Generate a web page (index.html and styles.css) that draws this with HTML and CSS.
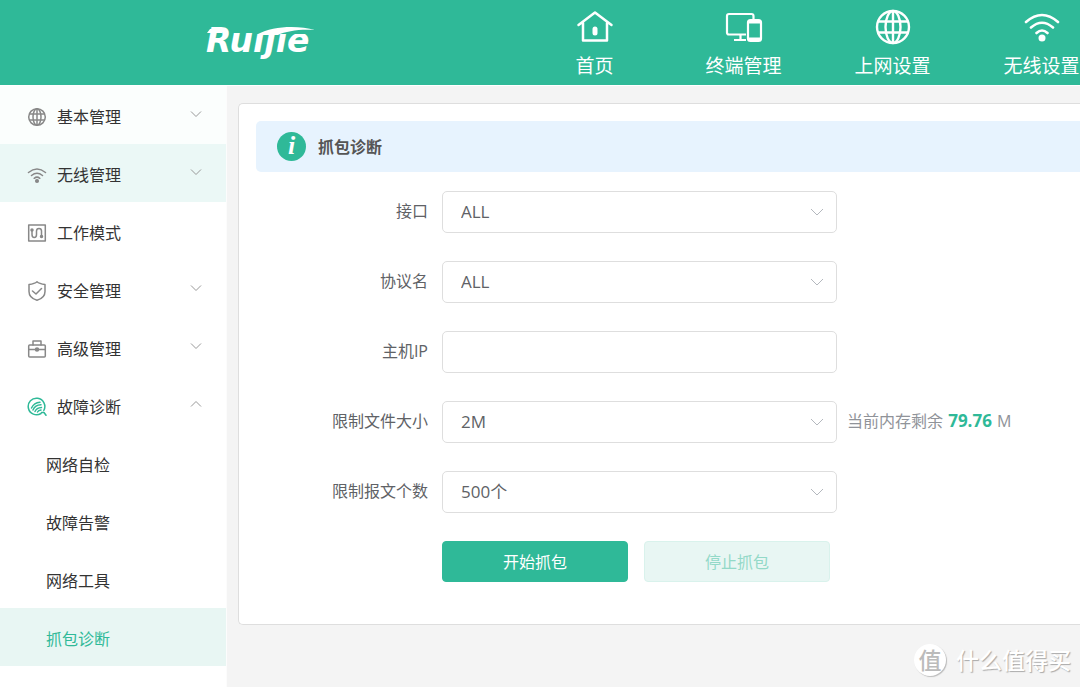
FILE: index.html
```
<!DOCTYPE html>
<html lang="zh-CN">
<head>
<meta charset="utf-8">
<title>抓包诊断</title>
<link rel="stylesheet" href="styles.css">
</head>
<body>
<header class="topbar">
  <a class="brand" href="#" aria-label="Ruijie">
    <svg class="brand-logo" width="124" height="46" viewBox="0 0 124 46">
      <text class="brand-text" x="6" y="32">Ruijie</text>
      <path class="brand-mask" d="M56 0H112V14H56Z"/>
      <path class="brand-shape" d="M10 9H22V13H7Z"/>
      <path class="brand-shape" d="M58 14C72 6 98 5 115 10C100 9 86 11 78 15H58Z"/>
    </svg>
  </a>
  <nav class="topnav">
    <a class="topnav-item" href="#">
      <svg width="38" height="38" viewBox="0 0 38 38" fill="none" stroke="#fff" stroke-width="2.5" stroke-linejoin="round" stroke-linecap="round"><path d="M2.5 17L19 4.500L35.500 17M7 15V32.500H31V15"/><path d="M19 21V25" stroke-width="5"/></svg>
      <span>首页</span>
    </a>
    <a class="topnav-item" href="#">
      <svg width="38" height="38" viewBox="0 0 38 38" fill="none" stroke="#fff" stroke-width="2.2" stroke-linejoin="round"><path d="M28.500 11V8Q28.500 6 26.500 6H4Q2 6 2 8V24.500Q2 26.500 4 26.500H21M15.500 27V32M9 32H21"/><rect x="23" y="12" width="13" height="21" rx="2.500"/><path d="M23 14H36M23 31H36" stroke-width="3"/></svg>
      <span>终端管理</span>
    </a>
    <a class="topnav-item" href="#">
      <svg width="38" height="38" viewBox="0 0 38 38" fill="none" stroke="#fff" stroke-width="2.400"><circle cx="19" cy="19" r="16"/><ellipse cx="19" cy="19" rx="7.500" ry="16"/><path d="M19 3V35M4 13.500H34M4 24.500H34"/></svg>
      <span>上网设置</span>
    </a>
    <a class="topnav-item" href="#">
      <svg width="38" height="38" viewBox="0 0 38 38" fill="none" stroke="#fff" stroke-width="2.600" stroke-linecap="round"><path d="M3 14Q19 0 35 14M8 19.500Q19 10 30 19.500M13.500 25Q19 20 24.500 25"/><circle cx="19" cy="30" r="3.500" fill="#fff" stroke="none"/></svg>
      <span>无线设置</span>
    </a>
  </nav>
</header>
<div class="layout">
  <nav class="sidebar">
    <a class="side-item side-item-soft" href="#">
      <svg class="side-icon" viewBox="0 0 20 20"><circle cx="10" cy="10" r="8.300"/><ellipse cx="10" cy="10" rx="4" ry="8.300"/><path d="M10 2V18M2.800 7H17.200M2.800 13H17.200"/></svg>
      <span class="side-label">基本管理</span>
      <svg class="side-arrow" viewBox="0 0 12 8"><path d="M1 1.500L6 6.500L11 1.500"/></svg>
    </a>
    <a class="side-item side-item-hover" href="#">
      <svg class="side-icon" viewBox="0 0 20 20"><path d="M1.500 7.500Q10 .5 18.500 7.500M4.500 10.500Q10 6 15.500 10.500M7.200 13.300Q10 11 12.800 13.300"/><circle class="solid" cx="10" cy="16" r="1.300"/></svg>
      <span class="side-label">无线管理</span>
      <svg class="side-arrow" viewBox="0 0 12 8"><path d="M1 1.500L6 6.500L11 1.500"/></svg>
    </a>
    <a class="side-item" href="#">
      <svg class="side-icon" viewBox="0 0 20 20"><rect x="1.700" y="2" width="16.600" height="16"/><path d="M5 7V11.500C5 15.500 9.500 15.500 9.500 11.500V8C9.500 4.500 14.500 4.500 14.500 8V13"/><circle class="solid" cx="5" cy="7" r="1"/><circle class="solid" cx="14.500" cy="13.500" r="1"/></svg>
      <span class="side-label">工作模式</span>
    </a>
    <a class="side-item" href="#">
      <svg class="side-icon" viewBox="0 0 20 20"><path d="M10 .8C12 2.700 15 3.200 18 3.500V10.500C18 15 14.500 18 10 19.200C5.500 18 2 15 2 10.500V3.500C5 3.200 8 2.700 10 .8ZM5.500 10L9 13L14.500 7.500"/></svg>
      <span class="side-label">安全管理</span>
      <svg class="side-arrow" viewBox="0 0 12 8"><path d="M1 1.500L6 6.500L11 1.500"/></svg>
    </a>
    <a class="side-item" href="#">
      <svg class="side-icon" viewBox="0 0 20 20"><rect x="1.700" y="6" width="16.600" height="12" rx="1"/><path d="M6 6V2H14V6M2 10.500H18"/><circle class="solid" cx="10" cy="10.500" r="1.500"/></svg>
      <span class="side-label">高级管理</span>
      <svg class="side-arrow" viewBox="0 0 12 8"><path d="M1 1.500L6 6.500L11 1.500"/></svg>
    </a>
    <a class="side-item" href="#">
      <svg class="side-icon side-icon-active" viewBox="0 0 20 20"><path d="M14 16.500A8.300 8.300 0 1 1 16.800 13.500M14.500 15.500H17L19 18.300"/><path d="M4.500 11Q7 5.500 13 5.200M6 13Q8 8 14 7.800M8 14.500Q9.500 10.800 14.500 10.500M10.500 15Q11.500 13.200 14 13"/></svg>
      <span class="side-label">故障诊断</span>
      <svg class="side-arrow" viewBox="0 0 12 8"><path d="M1 6.500L6 1.500L11 6.500"/></svg>
    </a>
    <a class="side-item side-sub" href="#">网络自检</a>
    <a class="side-item side-sub" href="#">故障告警</a>
    <a class="side-item side-sub" href="#">网络工具</a>
    <a class="side-item side-sub side-sub-active" href="#" aria-current="page">抓包诊断</a>
  </nav>
  <main class="content">
    <section class="card">
      <div class="banner">
        <span class="info-icon" aria-hidden="true">i</span>
        <h1 class="banner-title">抓包诊断</h1>
      </div>
      <form class="form">
        <label class="form-label" for="iface">接口</label>
        <div class="field">
          <select class="control" id="iface"><option>ALL</option></select>
          <svg class="field-arrow" viewBox="0 0 14 8"><path d="M1 1L7 7L13 1"/></svg>
        </div>
        <label class="form-label" for="proto">协议名</label>
        <div class="field">
          <select class="control" id="proto"><option>ALL</option></select>
          <svg class="field-arrow" viewBox="0 0 14 8"><path d="M1 1L7 7L13 1"/></svg>
        </div>
        <label class="form-label" for="host">主机IP</label>
        <div class="field">
          <input class="control" id="host" type="text">
        </div>
        <label class="form-label" for="size">限制文件大小</label>
        <div class="field">
          <select class="control" id="size"><option>2M</option></select>
          <svg class="field-arrow" viewBox="0 0 14 8"><path d="M1 1L7 7L13 1"/></svg>
        </div>
        <p class="hint">当前内存剩余 <strong class="hint-value">79.76</strong> M</p>
        <label class="form-label" for="count">限制报文个数</label>
        <div class="field">
          <select class="control" id="count"><option>500个</option></select>
          <svg class="field-arrow" viewBox="0 0 14 8"><path d="M1 1L7 7L13 1"/></svg>
        </div>
        <div class="actions">
          <button class="btn btn-primary" type="button">开始抓包</button>
          <button class="btn btn-disabled" type="button" disabled>停止抓包</button>
        </div>
      </form>
    </section>
  </main>
</div>
<div class="watermark"><span class="watermark-badge">值</span><span>什么值得买</span></div>
</body>
</html>
```
FILE: styles.css
```
* {
  box-sizing: border-box;
}

body {
  margin: 0;
  min-height: 100vh;
  display: flex;
  flex-direction: column;
  overflow-x: hidden;
  background: #f4f4f4;
  color: #333;
  font: 16px/24px "Open Sans", "Noto Sans CJK SC", sans-serif;
}

a {
  color: inherit;
  text-decoration: none;
}

.topbar {
  display: flex;
  height: 85px;
  background: #2fb998;
  color: #fff;
  overflow: hidden;
}

.brand {
  flex: none;
  width: 520px;
  padding: 20px 0 0 200px;
}

.brand-logo {
  display: block;
}

.brand-text {
  fill: #fff;
  font: italic bold 33px "DejaVu Sans", sans-serif;
}

.brand-mask {
  fill: #2fb998;
}

.brand-shape {
  fill: #fff;
}

.topnav {
  display: flex;
}

.topnav-item {
  flex: none;
  width: 149px;
  padding-top: 8px;
  display: flex;
  flex-direction: column;
  align-items: center;
  gap: 6px;
  font-size: 19px;
  line-height: 28px;
}

.layout {
  flex: 1;
  display: flex;
  border-top: 1px solid #fff;
}

.sidebar {
  flex: none;
  width: 227px;
  border-right: 1px solid #fcfcfc;
  background: #fff;
}

.side-item {
  display: flex;
  align-items: center;
  height: 58px;
  padding: 4px 24px 0 27px;
}

.side-item-soft {
  background: #fbfefd;
}

.side-item-hover {
  background: #ebf8f6;
}

.side-icon {
  width: 20px;
  height: 20px;
  margin-right: 10px;
  fill: none;
  stroke: #888;
  stroke-width: 1.5;
  stroke-linecap: round;
  stroke-linejoin: round;
}

.side-icon-active {
  stroke: #2fb998;
}

.solid {
  fill: #888;
}

.side-label {
  flex: 1;
}

.side-arrow {
  width: 12px;
  height: 8px;
  margin-bottom: 6px;
  fill: none;
  stroke: #999;
}

.side-sub {
  padding-left: 46px;
}

.side-sub-active {
  background: #e8f6f3;
  color: #2fb998;
}

.content {
  flex: 1;
  min-width: 0;
  padding: 17px 0 0 11px;
}

.card {
  padding: 17px 0 42px 17px;
  border: 1px solid #dedede;
  border-right: 0;
  border-radius: 5px 0 0 5px;
  background: #fff;
}

.banner {
  display: flex;
  align-items: center;
  gap: 12px;
  padding: 11px 21px;
  border-radius: 5px 0 0 5px;
  background: #e7f3fe;
}

.info-icon {
  width: 29px;
  height: 29px;
  border-radius: 50%;
  background: #2fb998;
  color: #fff;
  text-align: center;
  font: italic bold 26px/28px "Liberation Serif", serif;
}

.banner-title {
  margin: 0;
  color: #555;
  font-size: 16px;
  line-height: 28px;
}

.form {
  display: grid;
  grid-template-columns: 172px 395px 1fr;
  column-gap: 14px;
  row-gap: 28px;
  padding-top: 19px;
}

.form-label {
  grid-column: 1;
  color: #606266;
  line-height: 40px;
  text-align: right;
}

.field {
  position: relative;
}

.control {
  appearance: none;
  display: block;
  width: 100%;
  height: 42px;
  padding: 0 18px;
  border: 1px solid #dedede;
  border-radius: 5px;
  background: #fff;
  color: #606266;
  font: inherit;
  font-size: 17px;
}

.field-arrow {
  position: absolute;
  right: 13px;
  top: 17px;
  width: 14px;
  height: 8px;
  fill: none;
  stroke: #b4b8be;
  pointer-events: none;
}

.hint {
  margin: 0 0 0 -4px;
  color: #909399;
  line-height: 40px;
}

.hint-value {
  margin: 0 1px;
  color: #2fb998;
  font-size: 17px;
}

.actions {
  grid-column: 2 / 4;
  display: flex;
  gap: 16px;
}

.btn {
  width: 186px;
  height: 41px;
  border: 1px solid #2fb998;
  border-radius: 4px;
  font: inherit;
}

.btn-primary {
  background: #2fb998;
  color: #fff;
}

.btn-disabled {
  border-color: #d9f2ec;
  background: #e8f6f3;
  color: #93d9c8;
}

.watermark {
  position: absolute;
  right: 9px;
  bottom: 11px;
  display: flex;
  align-items: center;
  gap: 10px;
  color: #fff;
  font-size: 23px;
  font-weight: 500;
  line-height: 32px;
  text-shadow: 1px 1px 1px #aaa;
}

.watermark-badge {
  width: 32px;
  height: 32px;
  border-radius: 50%;
  background: #fff;
  box-shadow: 1px 1px 1px #bbb;
  color: #bbb;
  text-align: center;
  text-shadow: none;
}
```
